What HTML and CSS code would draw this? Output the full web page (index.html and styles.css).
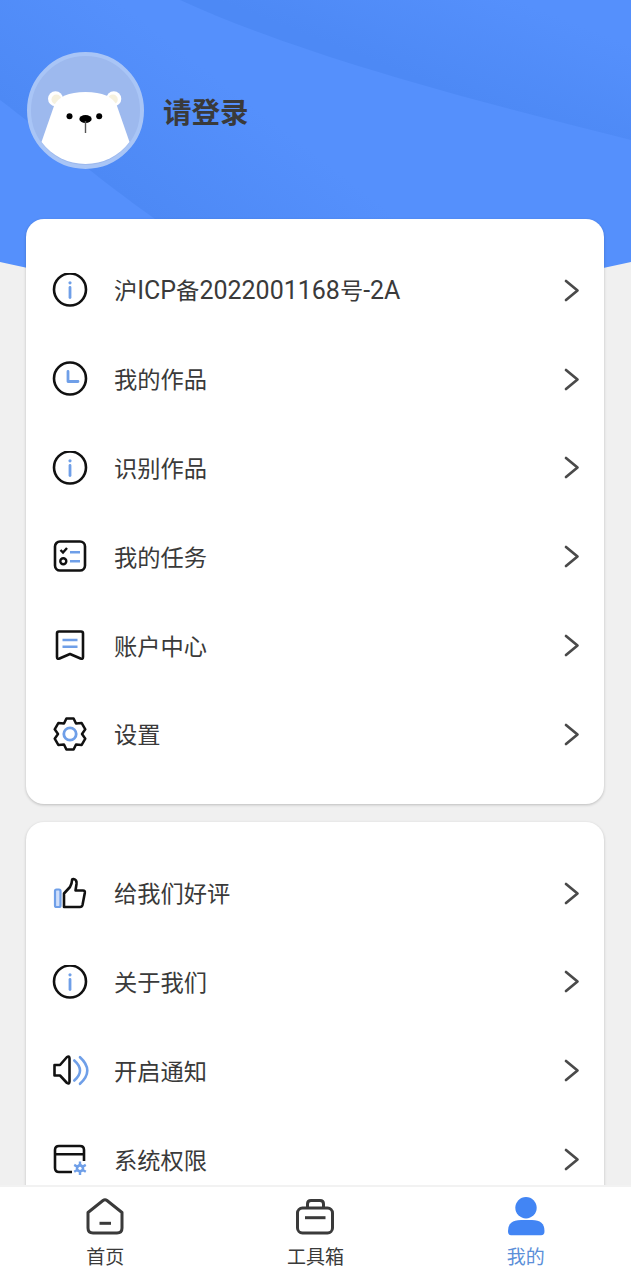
FILE: index.html
```html
<!DOCTYPE html>
<html>
<head>
  <meta charset="utf-8">
  <title>我的</title>
  <link rel="stylesheet" href="styles.css">
</head>
<body>
  <svg width="0" height="0" class="defs">
    <symbol id="icon-info" viewBox="0 0 36 36">
      <circle cx="18" cy="16.5" r="16" fill="none" stroke="#111" stroke-width="2.6"/>
      <circle cx="18" cy="9.8" r="1.6" fill="#6f9fe8"/>
      <path d="M18 14.5V24.5" fill="none" stroke="#6f9fe8" stroke-width="2.8" stroke-linecap="round"/>
    </symbol>
  </svg>

  <div class="page">
    <div class="content">
      <svg class="header-bg" viewBox="0 0 631 300" width="631" height="300">
        <defs>
          <clipPath id="header-shape">
            <path d="M0 262Q315 334 631 262V0H0Z"/>
          </clipPath>
          <linearGradient id="band-top" gradientUnits="userSpaceOnUse" x1="400" y1="72" x2="440" y2="-30">
            <stop offset="0" stop-color="#4d89f5"/>
            <stop offset="1" stop-color="#4d89f5" stop-opacity="0"/>
          </linearGradient>
          <linearGradient id="band-left" gradientUnits="userSpaceOnUse" x1="78" y1="160" x2="170" y2="41">
            <stop offset="0" stop-color="#4d89f5"/>
            <stop offset="1" stop-color="#4d89f5" stop-opacity="0"/>
          </linearGradient>
        </defs>
        <g clip-path="url(#header-shape)">
          <rect width="631" height="300" fill="#5590fc"/>
          <path d="M180 0C300 55 470 100 631 140V0Z" fill="url(#band-top)"/>
          <path d="M0 100C40 130 100 180 155 219H420L180 0H0Z" fill="url(#band-left)"/>
        </g>
      </svg>

      <div class="profile">
        <svg class="avatar" viewBox="0 0 117 117" width="117" height="117">
          <circle cx="58.5" cy="58.5" r="56.5" fill="#9db9ee" stroke="#a9c5f6" stroke-width="4"/>
          <circle cx="28.5" cy="46.8" r="7.5" fill="#fff"/>
          <circle cx="86.8" cy="46.8" r="7.5" fill="#fff"/>
          <circle cx="29.5" cy="47.5" r="5" fill="#f6f1de"/>
          <circle cx="85.8" cy="47.5" r="5" fill="#f6f1de"/>
          <path d="M14.5 90L27 54Q33 40 58.5 40Q84 40 90 54L102.5 90A55 55 0 0 1 14.5 90Z" fill="#fff"/>
          <circle cx="42.5" cy="64.2" r="3" fill="#000"/>
          <circle cx="72.2" cy="64.2" r="3" fill="#000"/>
          <ellipse cx="58.5" cy="67" rx="6.2" ry="4" fill="#000"/>
          <path d="M58.5 69V81" stroke="#555" stroke-width="1.4"/>
        </svg>
        <div class="name">请登录</div>
      </div>

      <div class="card">
        <div class="row">
          <svg class="icon" width="36" height="36"><use href="#icon-info"/></svg>
          <span class="label">沪<span class="latin">ICP</span>备<span class="latin">2022001168</span>号<span class="latin">-2A</span></span>
          <svg class="chevron" viewBox="0 0 16 24" width="16" height="24"><path d="M2 2L13.5 11.5L2 21"/></svg>
        </div>
        <div class="row">
          <svg class="icon" viewBox="0 0 36 36" width="36" height="36">
            <circle cx="18" cy="16.5" r="16" fill="none" stroke="#111" stroke-width="2.6"/>
            <path d="M16 9.5V19.5H26" fill="none" stroke="#6f9fe8" stroke-width="2.8" stroke-linecap="round" stroke-linejoin="round"/>
          </svg>
          <span class="label">我的作品</span>
          <svg class="chevron" viewBox="0 0 16 24" width="16" height="24"><path d="M2 2L13.5 11.5L2 21"/></svg>
        </div>
        <div class="row">
          <svg class="icon" width="36" height="36"><use href="#icon-info"/></svg>
          <span class="label">识别作品</span>
          <svg class="chevron" viewBox="0 0 16 24" width="16" height="24"><path d="M2 2L13.5 11.5L2 21"/></svg>
        </div>
        <div class="row">
          <svg class="icon" viewBox="0 0 36 36" width="36" height="36">
            <rect x="3" y="1.5" width="30" height="29" rx="5" fill="none" stroke="#111" stroke-width="2.6"/>
            <path d="M8.5 10L11 12.5L15 8" fill="none" stroke="#111" stroke-width="2.4"/>
            <circle cx="11.3" cy="21.2" r="3" fill="none" stroke="#111" stroke-width="2.4"/>
            <path d="M18 12.2H28M18 21.2H28" fill="none" stroke="#6f9fe8" stroke-width="2.6"/>
          </svg>
          <span class="label">我的任务</span>
          <svg class="chevron" viewBox="0 0 16 24" width="16" height="24"><path d="M2 2L13.5 11.5L2 21"/></svg>
        </div>
        <div class="row">
          <svg class="icon" viewBox="0 0 36 36" width="36" height="36">
            <path d="M5 4.5Q5 2.5 7 2.5H29Q31 2.5 31 4.5V28Q31 30.5 28.5 29.5L18 25L7.5 29.5Q5 30.5 5 28Z" fill="none" stroke="#111" stroke-width="2.6" stroke-linejoin="round"/>
            <path d="M10.5 11H25.5M10.5 17.7H25.5" fill="none" stroke="#6f9fe8" stroke-width="2.6"/>
          </svg>
          <span class="label">账户中心</span>
          <svg class="chevron" viewBox="0 0 16 24" width="16" height="24"><path d="M2 2L13.5 11.5L2 21"/></svg>
        </div>
        <div class="row">
          <svg class="icon" viewBox="0 0 36 36" width="36" height="36">
            <path d="M12 6.6L14.4 1.4H21.6L24 6.6L29.7 6.1L33.3 12.3L30 17L33.3 21.7L29.7 27.9L24 27.4L21.6 32.6H14.4L12 27.4L6.3 27.9L2.7 21.7L6 17L2.7 12.3L6.3 6.1Z" fill="none" stroke="#111" stroke-width="2.5" stroke-linejoin="round"/>
            <circle cx="18" cy="17" r="6.2" fill="none" stroke="#6f9fe8" stroke-width="2.8"/>
          </svg>
          <span class="label">设置</span>
          <svg class="chevron" viewBox="0 0 16 24" width="16" height="24"><path d="M2 2L13.5 11.5L2 21"/></svg>
        </div>
      </div>

      <div class="card">
        <div class="row">
          <svg class="icon" viewBox="0 0 36 36" width="36" height="36">
            <rect x="3" y="13.5" width="5.5" height="17.5" rx="1.5" fill="#cfdefa" stroke="#6f9fe8" stroke-width="2.2"/>
            <path d="M12 17.5L18 11Q20 7 20 4.5Q20 2.8 21.5 3Q25 3.5 24.5 8L23.5 14.5H31Q33.2 14.5 32.8 17L30.5 29Q30 31 28 31H12Z" fill="none" stroke="#111" stroke-width="2.6" stroke-linejoin="round"/>
          </svg>
          <span class="label">给我们好评</span>
          <svg class="chevron" viewBox="0 0 16 24" width="16" height="24"><path d="M2 2L13.5 11.5L2 21"/></svg>
        </div>
        <div class="row">
          <svg class="icon" width="36" height="36"><use href="#icon-info"/></svg>
          <span class="label">关于我们</span>
          <svg class="chevron" viewBox="0 0 16 24" width="16" height="24"><path d="M2 2L13.5 11.5L2 21"/></svg>
        </div>
        <div class="row">
          <svg class="icon" viewBox="0 0 36 36" width="36" height="36">
            <path d="M2.5 11H8L15 3Q17.5 1.5 17.5 4.5V27.5Q17.5 30.5 15 29L8 21.5H2.5Z" fill="none" stroke="#111" stroke-width="2.6" stroke-linejoin="round"/>
            <path d="M22.3 6.5Q33.7 16.5 22.3 26.5M28 3.2Q42.6 16.5 28 29.8" fill="none" stroke="#6f9fe8" stroke-width="2.6" stroke-linecap="round"/>
          </svg>
          <span class="label">开启通知</span>
          <svg class="chevron" viewBox="0 0 16 24" width="16" height="24"><path d="M2 2L13.5 11.5L2 21"/></svg>
        </div>
        <div class="row">
          <svg class="icon" viewBox="0 0 36 36" width="36" height="36">
            <path d="M20 29H7Q3 29 3 25V7Q3 3 7 3H28Q32 3 32 7V18M3 11.3H32" fill="none" stroke="#111" stroke-width="2.6"/>
            <path d="M28 18.5V32M22.2 21.9L33.8 28.7M33.8 21.9L22.2 28.7" stroke="#6f9fe8" stroke-width="2.4"/>
            <circle cx="28" cy="25.3" r="4.2" fill="#6f9fe8"/>
            <circle cx="28" cy="25.3" r="1.6" fill="#fff"/>
          </svg>
          <span class="label">系统权限</span>
          <svg class="chevron" viewBox="0 0 16 24" width="16" height="24"><path d="M2 2L13.5 11.5L2 21"/></svg>
        </div>
      </div>
    </div>

    <div class="tabbar">
      <div class="tab">
        <svg viewBox="0 0 40 40" width="40" height="40" class="tab-icon">
          <path d="M3 15.5L18 3.5Q20 2 22 3.5L37 15.5V31Q37 36 32 36H8Q3 36 3 31Z" fill="none" stroke="#3a3a3a" stroke-width="3" stroke-linejoin="round"/>
          <path d="M14.5 26.3H26" stroke="#3a3a3a" stroke-width="3"/>
        </svg>
        <span>首页</span>
      </div>
      <div class="tab">
        <svg viewBox="0 0 40 40" width="40" height="40" class="tab-icon">
          <rect x="2.5" y="11" width="35" height="25" rx="5" fill="none" stroke="#3a3a3a" stroke-width="3"/>
          <path d="M12.5 11V7Q12.5 3.5 16 3.5H25Q28.5 3.5 28.5 7V11" fill="none" stroke="#3a3a3a" stroke-width="3"/>
          <path d="M10 20.7H30.5" stroke="#3a3a3a" stroke-width="3"/>
        </svg>
        <span>工具箱</span>
      </div>
      <div class="tab active">
        <svg viewBox="0 0 40 40" width="40" height="40" class="tab-icon">
          <circle cx="20" cy="10.7" r="10.7" fill="#4285f4"/>
          <path d="M2 34Q2 23 15 23H26Q38.5 23 38.5 34Q38.5 38.3 35 38.3H5Q2 38.3 2 34Z" fill="#4285f4"/>
        </svg>
        <span>我的</span>
      </div>
    </div>
  </div>
</body>
</html>
```

FILE: styles.css
```css
* {
  box-sizing: border-box;
}

body {
  margin: 0;
  background-color: #f0f0f0;
  font-family: Roboto, "Noto Sans CJK SC", sans-serif;
  color: #3a3a3a;
}

.defs {
  position: absolute;
}

.page {
  display: flex;
  flex-direction: column;
  height: 1280px;
  overflow: hidden;
}

.content {
  position: relative;
  flex: 1;
  overflow: hidden;
  padding: 0 27px 0 26px;
}

.header-bg {
  position: absolute;
  top: 0;
  left: 0;
}

.profile {
  position: relative;
  display: flex;
  align-items: center;
  gap: 19.5px;
  height: 219px;
  padding-top: 51px;
  padding-bottom: 51px;
}

.avatar {
  margin-top: 1px;
  margin-left: 0.5px;
}

.name {
  font-size: 28.5px;
  font-weight: bold;
  margin-top: 2px;
}

.card {
  position: relative;
  background-color: white;
  border-radius: 18px;
  padding: 28px 0 24px;
  margin-bottom: 18px;
  box-shadow: 0 1px 3px rgba(0, 0, 0, 0.22);
}

.row {
  display: flex;
  align-items: center;
  height: 88.8px;
  padding: 0 24px 0 26px;
}

.icon {
  flex: none;
  overflow: visible;
}

.label {
  flex: 1;
  font-size: 23.25px;
  margin-left: 26px;
  margin-bottom: 4px;
}

.latin {
  font-size: 25px;
}

.chevron {
  flex: none;
  margin-top: -1px;
  fill: none;
  stroke: #4a4a4a;
  stroke-width: 2.7;
  stroke-linecap: round;
  stroke-linejoin: round;
}

.tabbar {
  flex: none;
  position: relative;
  display: grid;
  grid-template-columns: repeat(3, 1fr);
  height: 95px;
  background-color: white;
  border-top: 2px solid #f2f2f2;
}

.tab {
  display: flex;
  flex-direction: column;
  align-items: center;
  padding-top: 10px;
  font-size: 19px;
  line-height: 30px;
}

.tab-icon {
  display: block;
  margin-bottom: 6px;
}

.active {
  color: #5b8fd9;
}
```
